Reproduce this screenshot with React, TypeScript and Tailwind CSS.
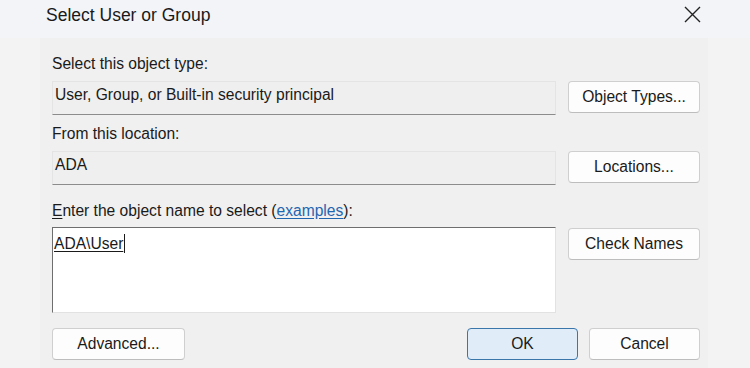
import React from "react";

const font = { fontFamily: '"Liberation Sans", Arial, sans-serif' };

const Button = ({ label, primary }: { label: string; primary?: boolean }) => (
    <button
        className={
            primary
                ? "h-[32px] w-[111px] rounded-[4px] border border-[#3a76aa] bg-[#e0ecf8] text-[15.6px] text-[#1a1a1a]"
                : "h-[32px] w-[111px] rounded-[4px] border border-[#cfcfcf] border-b-[#bdbdbd] bg-[#fdfdfd] text-[15.6px] text-[#1a1a1a]"
        }
    >
        {label}
    </button>
);

const SideButton = ({ label }: { label: string }) => (
    <button className="h-[32px] w-[132px] shrink-0 rounded-[4px] border border-[#cfcfcf] border-b-[#bdbdbd] bg-[#fdfdfd] text-[15.6px] text-[#1a1a1a]">
        {label}
    </button>
);

const ReadField = ({ value }: { value: string }) => (
    <div className="h-[34px] w-[504px] shrink-0 border border-[#e4e4e4] border-b-[#8c8c8c] bg-[#efefef] pl-[2px] pt-[3px] text-[15.6px] leading-[20px] text-[#1a1a1a]">
        {value}
    </div>
);

export default function App() {
    return (
        <div className="flex h-[368px] w-[750px] flex-col overflow-hidden bg-[#f3f3f3]" style={font}>
            <div className="flex h-[38px] shrink-0 items-start justify-between bg-[#f3f4f8] pl-[46px] pr-[49px]">
                <span className="mt-[4px] text-[17.5px] leading-[22px] text-[#1a1a1a]">Select User or Group</span>
                <svg width="17" height="17" viewBox="0 0 17 17" className="mt-[6px]">
                    <path d="M1 1 L16 16 M16 1 L1 16" stroke="#222" strokeWidth="1.4" fill="none" />
                </svg>
            </div>
            <div className="ml-[40px] flex w-[668px] flex-1 flex-col bg-[#f0f0f0] pl-[12px]">
                <div className="mt-[16px] text-[15.6px] leading-[20px] text-[#1a1a1a]">Select this object type:</div>
                <div className="mt-[7px] flex items-start gap-[12px]">
                    <ReadField value="User, Group, or Built-in security principal" />
                    <SideButton label="Object Types..." />
                </div>
                <div className="mt-[9px] text-[15.6px] leading-[20px] text-[#1a1a1a]">From this location:</div>
                <div className="mt-[7px] flex items-start gap-[12px]">
                    <ReadField value="ADA" />
                    <SideButton label="Locations..." />
                </div>
                <div className="mt-[16px] text-[15.6px] leading-[20px] text-[#1a1a1a]">
                    <span className="underline underline-offset-2">E</span>nter the object name to select (
                    <span className="text-[#1f66b1] underline underline-offset-2">examples</span>):
                </div>
                <div className="mt-[6px] flex items-start gap-[12px]">
                    <div className="h-[86px] w-[504px] shrink-0 border border-[#e2e2e2] border-l-[#6e6e6e] border-t-[#6e6e6e] bg-white pl-[1px] pt-[2px] text-[15.6px] leading-[20px] text-[#1a1a1a]">
                        <span className="underline underline-offset-2">ADA\User</span>
                        <span className="ml-[1px] inline-block h-[19px] w-[1px] translate-y-[4px] bg-[#1a1a1a]" />
                    </div>
                    <div className="mt-[1px]">
                        <SideButton label="Check Names" />
                    </div>
                </div>
                <div className="mt-[15px] flex w-[648px] items-start">
                    <button className="h-[32px] w-[133px] rounded-[4px] border border-[#cfcfcf] border-b-[#bdbdbd] bg-[#fdfdfd] text-[15.6px] text-[#1a1a1a]">
                        Advanced...
                    </button>
                    <div className="ml-auto flex gap-[11px]">
                        <Button label="OK" primary />
                        <Button label="Cancel" />
                    </div>
                </div>
            </div>
        </div>
    );
}
